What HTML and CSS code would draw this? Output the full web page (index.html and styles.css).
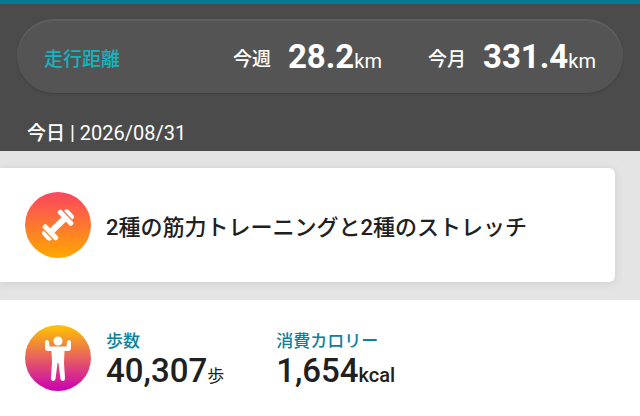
FILE: index.html
```
<!DOCTYPE html>
<html lang="ja">
<head>
    <meta charset="UTF-8">
    <meta name="viewport" content="width=device-width, initial-scale=1.0">
    <title>走行距離</title>
    <link rel="stylesheet" href="styles.css">
</head>
<body>
    <header class="summary">
        <div class="distance">
            <h1 class="distance-title">走行距離</h1>
            <div class="period">
                <span class="period-label">今週</span>
                <span class="period-value">28.2<small>km</small></span>
            </div>
            <div class="period">
                <span class="period-label">今月</span>
                <span class="period-value">331.4<small>km</small></span>
            </div>
        </div>
        <p class="today"><strong>今日</strong> | 2026/08/31</p>
    </header>
    <main>
        <section class="card">
            <svg class="icon" viewBox="0 0 66 66" aria-hidden="true">
                <defs>
                    <linearGradient id="workout" x1="0" y1="0" x2="0" y2="1">
                        <stop offset="0" stop-color="#fb4560"/>
                        <stop offset="1" stop-color="#ffa800"/>
                    </linearGradient>
                </defs>
                <circle cx="33" cy="33" r="33" fill="url(#workout)"/>
                <g transform="translate(33 33) rotate(-44)" fill="#fff">
                    <rect x="-9" y="-3" width="18" height="6"/>
                    <rect x="-13" y="-10" width="5" height="20" rx="2"/>
                    <rect x="8" y="-10" width="5" height="20" rx="2"/>
                    <path d="M-14.200-6v12h-.8q-3 0-3-3v-6q0-3 3-3z"/>
                    <path d="M14.200-6v12h.8q3 0 3-3v-6q0-3-3-3z"/>
                </g>
            </svg>
            <h2 class="card-title">2種の筋力トレーニングと2種のストレッチ</h2>
        </section>
        <section class="activity">
            <svg class="icon" viewBox="0 0 66 66" aria-hidden="true">
                <defs>
                    <linearGradient id="steps" x1="0" y1="0" x2="0" y2="1">
                        <stop offset="0" stop-color="#ffc400"/>
                        <stop offset="0.5" stop-color="#e7605f"/>
                        <stop offset="1" stop-color="#c900b4"/>
                    </linearGradient>
                </defs>
                <circle cx="33" cy="33" r="33" fill="url(#steps)"/>
                <g fill="#fff">
                    <circle cx="33" cy="16" r="4.500"/>
                    <path d="M22 15q1.500 0 2 1.500l.5 5h17l.5-5q.5-1.500 2-1.500t2 2v6q0 3-3 3h-3.500l-.5 12 1 15q0 3-2 3t-2.500-2L33.500 38h-1L30.500 54q-.5 2-2.500 2t-2-3l1-15-.5-12H23q-3 0-3-3v-6q0-2 2-2z"/>
                </g>
            </svg>
            <dl class="stats">
                <div class="stat">
                    <dt>歩数</dt>
                    <dd>40,307<small class="steps-unit">歩</small></dd>
                </div>
                <div class="stat">
                    <dt>消費カロリー</dt>
                    <dd>1,654<small>kcal</small></dd>
                </div>
            </dl>
        </section>
    </main>
</body>
</html>
```
FILE: styles.css
```
* {
    margin: 0;
    padding: 0;
    box-sizing: border-box;
}

body {
    font-family: Roboto, "Noto Sans CJK JP", sans-serif;
    background-color: #e4e4e4;
    color: #202020;
}

/* Header */

.summary {
    padding: 15px 17px 4px;
    border-top: 4px solid #047a92;
    background-color: #4b4b4b;
    color: #fff;
}

.distance {
    display: flex;
    align-items: center;
    height: 74px;
    padding: 2px 27px 0;
    border-radius: 37px;
    background-color: #545454;
    box-shadow: inset 0 2px 1px #606060, 0 1px 2px #404040;
}

.distance-title {
    margin-right: auto;
    font-size: 19px;
    font-weight: 500;
    color: #18b2bd;
}

.period {
    display: flex;
    align-items: center;
    gap: 17px;
    margin-left: 46px;
}

.period-label {
    font-size: 19px;
    font-weight: 500;
}

.period-value {
    padding-top: 4px;
    font-size: 33px;
    font-weight: 700;
    line-height: 40px;
}

.period-value small {
    font-size: 20px;
    font-weight: 400;
}

.today {
    margin-top: 27px;
    padding-left: 10px;
    font-size: 20px;
    line-height: 27px;
}

.today strong {
    font-size: 19px;
    font-weight: 500;
}

/* Workout card */

.card {
    display: flex;
    align-items: center;
    gap: 15px;
    min-height: 114px;
    margin: 17px 25px 18px 0;
    padding: 0 25px;
    border-radius: 0 6px 6px 0;
    background-color: #fff;
    box-shadow: 0 1px 10px rgba(0, 0, 0, 0.1);
}

.icon {
    flex: none;
    width: 66px;
    height: 66px;
}

.card-title {
    padding-top: 6px;
    font-size: 22px;
    font-weight: 500;
    line-height: 32px;
}

/* Steps and calories */

.activity {
    display: flex;
    align-items: center;
    gap: 15px;
    min-height: 116px;
    padding: 0 25px;
    background-color: #fff;
}

.stats {
    display: flex;
    gap: 52px;
    padding-top: 6px;
}

.stat dt {
    font-size: 17px;
    font-weight: 500;
    line-height: 24px;
    color: #0b8299;
}

.stat dd {
    font-size: 33px;
    font-weight: 500;
    line-height: 36px;
}

.stat small {
    font-size: 20px;
}

.stat .steps-unit {
    font-size: 17px;
    font-weight: 400;
}
```
